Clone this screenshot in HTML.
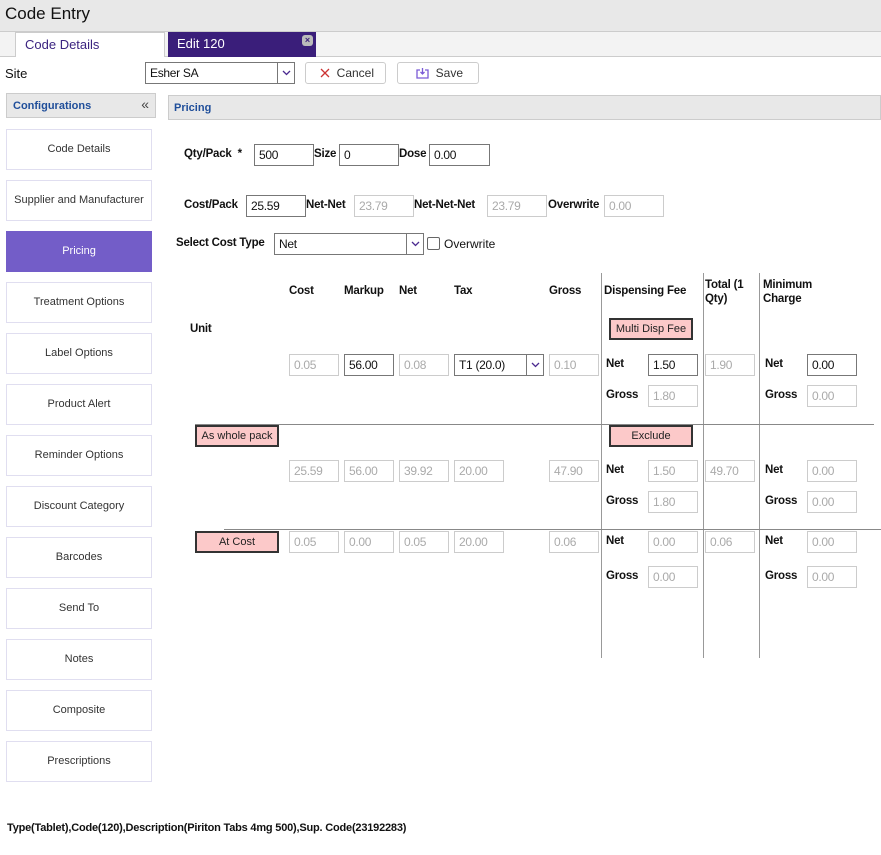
<!DOCTYPE html>
<html><head><style>
*{box-sizing:border-box;margin:0;padding:0}
body{width:881px;height:855px;position:relative;background:#fff;font-family:"Liberation Sans",sans-serif;font-size:12px;color:#111;overflow:hidden}
.a{position:absolute}
.in{position:absolute;height:22px;border:1px solid #777;background:#fff;font-size:12px;padding:3px 0 0 4px;color:#111;letter-spacing:-0.3px}
.dis{border-color:#ccc;color:#aaa}
.lb{position:absolute;font-weight:bold;font-size:11.5px;color:#111;letter-spacing:-0.2px}
.nav{position:absolute;left:6px;width:146px;height:41px;border:1px solid #e0def0;background:#fff;text-align:center;line-height:39px;font-size:11px;color:#333}
.pb{position:absolute;height:22px;background:#fcc9c9;border:2px solid #333;font-size:11px;text-align:center;line-height:18px;color:#222}
.vl{position:absolute;width:1px;background:#999;top:273px;height:385px}
.dd{position:absolute;width:18px;height:22px;border:1px solid #777}
.dd svg{position:absolute;left:4px;top:7px}
</style></head><body>
<div class="a" style="left:0;top:0;width:881px;height:31px;background:#e8e8e8"></div>
<div class="a" style="left:5px;top:4px;font-size:17px;color:#111">Code Entry</div>
<div class="a" style="left:0;top:31px;width:881px;height:26px;background:#f3f3f3;border-top:1px solid #ccc;border-bottom:1px solid #ccc"></div>
<div class="a" style="left:15px;top:32px;width:150px;height:25px;background:#fff;border:1px solid #ccc;border-bottom:none;color:#3b2480;font-size:13px;padding:4px 0 0 9px">Code Details</div>
<div class="a" style="left:168px;top:32px;width:148px;height:25px;background:#3a1e7a;color:#fff;font-size:13px;padding:4px 0 0 9px">Edit 120</div>
<div class="a" style="left:302px;top:35px;width:11px;height:11px;border-radius:3px;background:#bbb;color:#3a1e7a;font-size:9px;line-height:11px;text-align:center;font-weight:bold">×</div>
<div class="a" style="left:5px;top:66px;font-size:13px">Site</div>
<div class="in" style="left:145px;top:62px;width:150px;height:22px;font-size:12px">Esher SA</div>
<div class="dd" style="left:277px;top:62px"><svg width="9" height="6"><path d="M1 1L4.5 4.5L8 1" fill="none" stroke="#4b2a90" stroke-width="1.3"/></svg></div>
<div class="a" style="left:305px;top:62px;width:81px;height:22px;border:1px solid #ccc;border-radius:3px;font-size:12px;line-height:20px;padding-left:14px;color:#333"><svg width="10" height="10" style="vertical-align:-1px"><path d="M1 1L9 9M9 1L1 9" stroke="#c33" stroke-width="1.3"/></svg>&nbsp;&nbsp;Cancel</div>
<div class="a" style="left:397px;top:62px;width:82px;height:22px;border:1px solid #ccc;border-radius:3px;font-size:12px;line-height:20px;padding-left:18px;color:#333"><svg width="13" height="12" style="vertical-align:-2px"><path d="M4 3H1V11H12V3H9M6.5 1V7M4.5 5L6.5 7L8.5 5" fill="none" stroke="#7b5bd6" stroke-width="1.3"/></svg>&nbsp; Save</div>
<div class="a" style="left:6px;top:93px;width:150px;height:25px;background:#e8e8e8;border:1px solid #ccc;color:#1f4e9a;font-weight:bold;font-size:11px;padding:6px 0 0 6px">Configurations<span style="position:absolute;right:6px;top:2px;color:#444;font-weight:normal;font-size:14px">«</span></div>
<div class="a" style="left:168px;top:95px;width:713px;height:25px;background:#e8e8e8;border:1px solid #ccc;color:#1f4e9a;font-weight:bold;font-size:11px;padding:6px 0 0 5px">Pricing</div>
<div class="nav" style="top:129px">Code Details</div>
<div class="nav" style="top:180px">Supplier and Manufacturer</div>
<div class="nav" style="top:231px;background:#735dc8;color:#fff;border-color:#735dc8">Pricing</div>
<div class="nav" style="top:282px">Treatment Options</div>
<div class="nav" style="top:333px">Label Options</div>
<div class="nav" style="top:384px">Product Alert</div>
<div class="nav" style="top:435px">Reminder Options</div>
<div class="nav" style="top:486px">Discount Category</div>
<div class="nav" style="top:537px">Barcodes</div>
<div class="nav" style="top:588px">Send To</div>
<div class="nav" style="top:639px">Notes</div>
<div class="nav" style="top:690px">Composite</div>
<div class="nav" style="top:741px">Prescriptions</div>

<div class="lb" style="left:184px;top:148px">Qty/Pack &nbsp;*</div>
<div class="in" style="left:254px;top:144px;width:60px">500</div>
<div class="lb" style="left:314px;top:148px">Size</div>
<div class="in" style="left:339px;top:144px;width:60px">0</div>
<div class="lb" style="left:399px;top:148px">Dose</div>
<div class="in" style="left:429px;top:144px;width:61px">0.00</div>

<div class="lb" style="left:184px;top:199px">Cost/Pack</div>
<div class="in" style="left:246px;top:195px;width:60px">25.59</div>
<div class="lb" style="left:306px;top:199px">Net-Net</div>
<div class="in dis" style="left:354px;top:195px;width:60px">23.79</div>
<div class="lb" style="left:414px;top:199px">Net-Net-Net</div>
<div class="in dis" style="left:487px;top:195px;width:60px">23.79</div>
<div class="lb" style="left:548px;top:199px">Overwrite</div>
<div class="in dis" style="left:604px;top:195px;width:60px">0.00</div>

<div class="lb" style="left:176px;top:237px">Select Cost Type</div>
<div class="in" style="left:274px;top:233px;width:150px">Net</div>
<div class="dd" style="left:406px;top:233px"><svg width="9" height="6"><path d="M1 1L4.5 4.5L8 1" fill="none" stroke="#4b2a90" stroke-width="1.3"/></svg></div>
<div class="a" style="left:427px;top:237px;width:13px;height:13px;border:1px solid #666;border-radius:2px"></div>
<div class="a" style="left:444px;top:237px;font-size:12px">Overwrite</div>

<div class="vl" style="left:601px"></div>
<div class="vl" style="left:703px"></div>
<div class="vl" style="left:759px"></div>
<div class="a" style="left:195px;top:424px;width:679px;height:1px;background:#888"></div>
<div class="a" style="left:224px;top:529px;width:657px;height:1px;background:#888"></div>

<div class="lb" style="left:289px;top:285px">Cost</div>
<div class="lb" style="left:344px;top:285px">Markup</div>
<div class="lb" style="left:399px;top:285px">Net</div>
<div class="lb" style="left:454px;top:285px">Tax</div>
<div class="lb" style="left:549px;top:285px">Gross</div>
<div class="lb" style="left:604px;top:285px">Dispensing Fee</div>
<div class="lb" style="left:705px;top:278px;line-height:14px">Total (1<br>Qty)</div>
<div class="lb" style="left:763px;top:278px;line-height:14px">Minimum<br>Charge</div>
<div class="lb" style="left:190px;top:323px">Unit</div>
<div class="pb" style="left:609px;top:318px;width:84px">Multi Disp Fee</div>

<div class="in dis" style="left:289px;top:354px;width:50px">0.05</div>
<div class="in" style="left:344px;top:354px;width:50px">56.00</div>
<div class="in dis" style="left:399px;top:354px;width:50px">0.08</div>
<div class="in" style="left:454px;top:354px;width:90px">T1 (20.0)</div>
<div class="dd" style="left:526px;top:354px"><svg width="9" height="6"><path d="M1 1L4.5 4.5L8 1" fill="none" stroke="#4b2a90" stroke-width="1.3"/></svg></div>
<div class="in dis" style="left:549px;top:354px;width:50px">0.10</div>
<div class="lb" style="left:606px;top:358px">Net</div>
<div class="in" style="left:648px;top:354px;width:50px">1.50</div>
<div class="in dis" style="left:705px;top:354px;width:50px">1.90</div>
<div class="lb" style="left:765px;top:358px">Net</div>
<div class="in" style="left:807px;top:354px;width:50px">0.00</div>
<div class="lb" style="left:606px;top:389px">Gross</div>
<div class="in dis" style="left:648px;top:385px;width:50px">1.80</div>
<div class="lb" style="left:765px;top:389px">Gross</div>
<div class="in dis" style="left:807px;top:385px;width:50px">0.00</div>

<div class="pb" style="left:195px;top:425px;width:84px">As whole pack</div>
<div class="pb" style="left:609px;top:425px;width:84px">Exclude</div>
<div class="in dis" style="left:289px;top:460px;width:50px">25.59</div>
<div class="in dis" style="left:344px;top:460px;width:50px">56.00</div>
<div class="in dis" style="left:399px;top:460px;width:50px">39.92</div>
<div class="in dis" style="left:454px;top:460px;width:50px">20.00</div>
<div class="in dis" style="left:549px;top:460px;width:50px">47.90</div>
<div class="lb" style="left:606px;top:464px">Net</div>
<div class="in dis" style="left:648px;top:460px;width:50px">1.50</div>
<div class="in dis" style="left:705px;top:460px;width:50px">49.70</div>
<div class="lb" style="left:765px;top:464px">Net</div>
<div class="in dis" style="left:807px;top:460px;width:50px">0.00</div>
<div class="lb" style="left:606px;top:495px">Gross</div>
<div class="in dis" style="left:648px;top:491px;width:50px">1.80</div>
<div class="lb" style="left:765px;top:495px">Gross</div>
<div class="in dis" style="left:807px;top:491px;width:50px">0.00</div>

<div class="pb" style="left:195px;top:531px;width:84px">At Cost</div>
<div class="in dis" style="left:289px;top:531px;width:50px">0.05</div>
<div class="in dis" style="left:344px;top:531px;width:50px">0.00</div>
<div class="in dis" style="left:399px;top:531px;width:50px">0.05</div>
<div class="in dis" style="left:454px;top:531px;width:50px">20.00</div>
<div class="in dis" style="left:549px;top:531px;width:50px">0.06</div>
<div class="lb" style="left:606px;top:535px">Net</div>
<div class="in dis" style="left:648px;top:531px;width:50px">0.00</div>
<div class="in dis" style="left:705px;top:531px;width:50px">0.06</div>
<div class="lb" style="left:765px;top:535px">Net</div>
<div class="in dis" style="left:807px;top:531px;width:50px">0.00</div>
<div class="lb" style="left:606px;top:570px">Gross</div>
<div class="in dis" style="left:648px;top:566px;width:50px">0.00</div>
<div class="lb" style="left:765px;top:570px">Gross</div>
<div class="in dis" style="left:807px;top:566px;width:50px">0.00</div>

<div class="lb" style="left:7px;top:822px;font-size:11px">Type(Tablet),Code(120),Description(Piriton Tabs 4mg 500),Sup. Code(23192283)</div>
</body></html>
